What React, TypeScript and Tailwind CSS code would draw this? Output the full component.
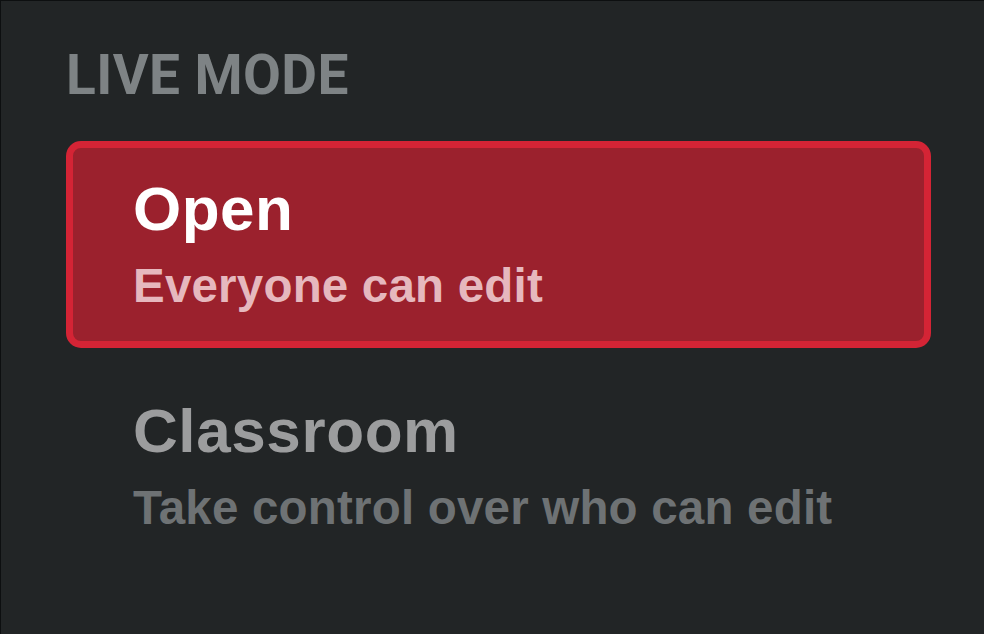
import React from "react";

export default function App() {
  return (
    <div className="w-[984px] h-[634px] bg-[#222526] border-l border-t border-[#0d0f10] pl-[65px] pr-[53px] overflow-hidden">
      <div
        className="pt-[44px] text-[55px] leading-[60px] font-bold text-[#7e8385] tracking-[0.4px]"
        style={{ fontFamily: "Roboto, sans-serif" }}
      >
        LIVE MODE
      </div>
      <div className="mt-[36px] flex flex-col gap-[15px]" style={{ fontFamily: '"Liberation Sans", Arial, sans-serif' }}>
        <div className="rounded-[15px] border-[7px] border-[#d42435] bg-[#9b212d] pl-[60px] pt-[30px] pb-[31px]">
          <div className="text-[62px] leading-[62px] font-bold text-white tracking-[0.5px]">Open</div>
          <div className="mt-[22px] text-[47.5px] leading-[47.5px] font-bold text-[#e6b8be] tracking-[0.2px]">Everyone can edit</div>
        </div>
        <div className="rounded-[15px] border-[7px] border-transparent pl-[60px] pt-[30px] pb-[31px]">
          <div className="text-[62px] leading-[62px] font-bold text-[#9c9d9e] tracking-[0.6px]">Classroom</div>
          <div className="mt-[22px] text-[47.5px] leading-[47.5px] font-bold text-[#6e7274] tracking-[0.2px]">Take control over who can edit</div>
        </div>
      </div>
    </div>
  );
}
